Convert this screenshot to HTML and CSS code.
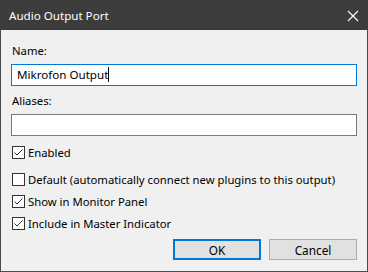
FILE: index.html
```html
<!DOCTYPE html>
<html lang="en">
<head>
  <meta charset="UTF-8">
  <title>Audio Output Port</title>
  <link rel="stylesheet" href="styles.css">
</head>
<body>
  <div class="window">
    <div class="titlebar">
      <span class="title">Audio Output Port</span>
      <svg class="close" width="12" height="12" viewBox="0 0 12 12">
        <path d="M1 1 L11 11 M11 1 L1 11" stroke="#ffffff" stroke-width="1.1" fill="none"/>
      </svg>
    </div>

    <div class="content">
      <label class="field-label">Name:</label>
      <div class="textbox focused">Mikrofon Output<span class="caret"></span></div>

      <label class="field-label second">Aliases:</label>
      <div class="textbox"></div>

      <div class="check first">
        <span class="box checked"></span>
        <span>Enabled</span>
      </div>

      <div class="check spaced">
        <span class="box"></span>
        <span>Default (automatically connect new plugins to this output)</span>
      </div>
      <div class="check">
        <span class="box checked"></span>
        <span>Show in Monitor Panel</span>
      </div>
      <div class="check">
        <span class="box checked"></span>
        <span>Include in Master Indicator</span>
      </div>

      <div class="buttons">
        <button class="btn default">OK</button>
        <button class="btn">Cancel</button>
      </div>
    </div>
  </div>
</body>
</html>
```

FILE: styles.css
```css
body {
  margin: 0;
  font-family: "Noto Sans", "Open Sans", sans-serif;
  font-size: 11.3px;
  color: #000;
}

.window {
  width: 368px;
  height: 272px;
  box-sizing: border-box;
  border: 1px solid #4b4b4b;
  border-top: none;
  background-color: #f0f0f0;
  display: flex;
  flex-direction: column;
}

.titlebar {
  height: 30px;
  margin: 0 -1px;
  background-color: #3c3c3c;
  display: flex;
  align-items: center;
  justify-content: space-between;
  padding: 0 9px 0 9px;
  color: #ffffff;
  font-size: 11.6px;
}

.close {
  display: block;
  margin-top: 1px;
}

.content {
  flex: 1;
  padding: 13px 10px 0 10px;
  display: flex;
  flex-direction: column;
}

.field-label {
  display: block;
  line-height: 16px;
  padding-left: 1px;
}

.field-label.second {
  margin-top: 7px;
}

.textbox {
  height: 22px;
  box-sizing: border-box;
  margin-top: 5px;
  border: 1px solid #7a7a7a;
  background-color: #ffffff;
  padding: 0 5px;
  line-height: 20px;
  font-size: 11.6px;
}

.textbox.focused {
  border-color: #0078d7;
}

.caret {
  display: inline-block;
  width: 1px;
  height: 15px;
  background-color: #000;
  vertical-align: -3px;
}

.check {
  display: flex;
  align-items: center;
  gap: 3px;
  height: 22px;
  padding-left: 1px;
}

.check.first {
  margin-top: 5px;
}

.check.spaced {
  margin-top: 5px;
}

.box {
  width: 13px;
  height: 13px;
  box-sizing: border-box;
  border: 1px solid #333333;
  background-color: #ffffff;
  flex: none;
}

.box.checked {
  background: #ffffff url("data:image/svg+xml;utf8,<svg xmlns='http://www.w3.org/2000/svg' width='11' height='11'><path d='M1.5 5.5 L4 8 L9.5 2.5' stroke='%23333' stroke-width='1' fill='none'/></svg>") no-repeat center;
}

.buttons {
  margin-top: auto;
  margin-bottom: 11px;
  display: flex;
  justify-content: flex-end;
  gap: 8px;
}

.btn {
  width: 88px;
  height: 21px;
  box-sizing: border-box;
  font-family: inherit;
  font-size: 11.8px;
  background-color: #e1e1e1;
  border: 1px solid #adadad;
  padding: 0;
  color: #000;
}

.btn.default {
  border: 2px solid #0078d7;
}
```
